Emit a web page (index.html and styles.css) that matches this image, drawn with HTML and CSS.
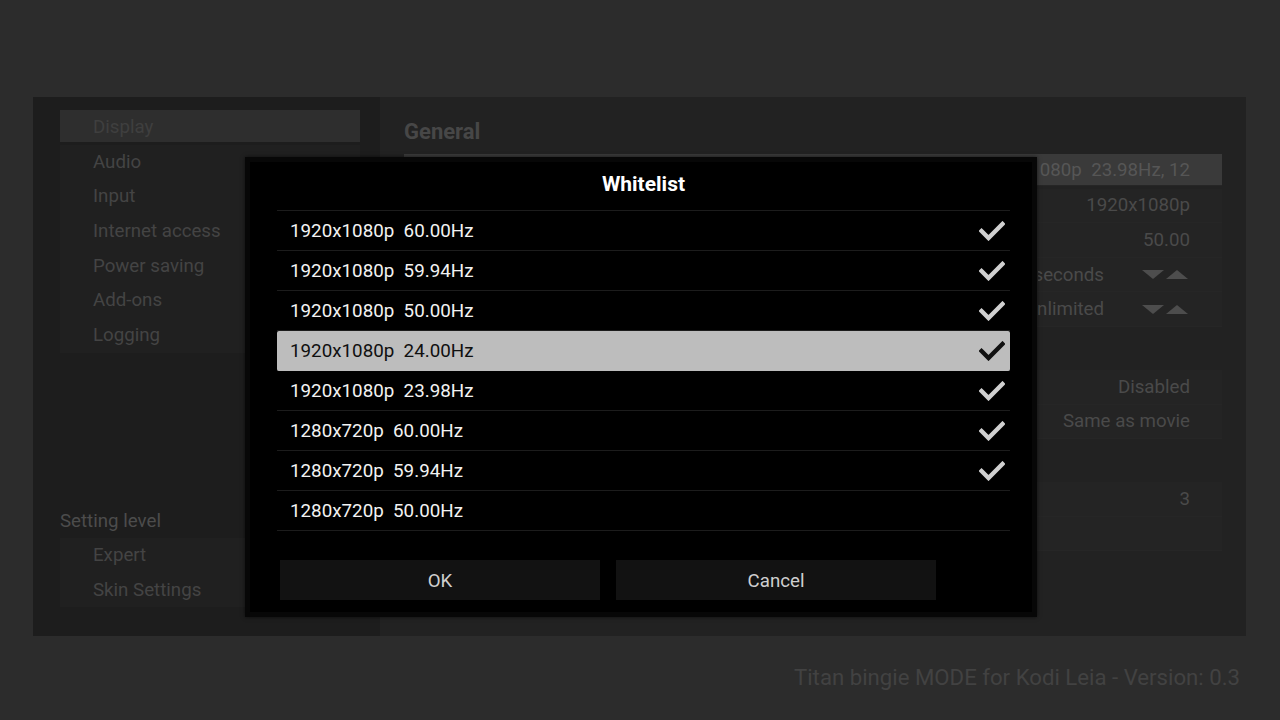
FILE: index.html
```html
<!DOCTYPE html>
<html lang="en">
<head>
<meta charset="utf-8">
<title>Settings - Whitelist</title>
<link rel="stylesheet" href="styles.css">
</head>
<body>
<div class="screen">
  <div class="panel">
    <aside class="sidebar">
      <ul class="menu">
        <li class="menu-item active">Display</li>
        <li class="menu-item">Audio</li>
        <li class="menu-item">Input</li>
        <li class="menu-item">Internet access</li>
        <li class="menu-item">Power saving</li>
        <li class="menu-item">Add-ons</li>
        <li class="menu-item">Logging</li>
      </ul>
      <div class="level">
        <div class="level-title">Setting level</div>
        <ul class="menu">
          <li class="menu-item">Expert</li>
          <li class="menu-item">Skin Settings</li>
        </ul>
      </div>
    </aside>
    <main class="content">
      <h2 class="group-title">General</h2>
      <div class="row focused"><span class="label"></span><span class="value"><span>1920x1080p  60.00Hz, 1920x1080p  23.98Hz, 12</span></span></div>
      <div class="row"><span class="label"></span><span class="value"><span>1920x1080p</span></span></div>
      <div class="row"><span class="label"></span><span class="value"><span>50.00</span></span></div>
      <div class="row"><span class="label"></span><span class="value"><span>0.0 seconds</span></span><span class="spin"><i class="down"></i><i class="up"></i></span></div>
      <div class="row"><span class="label"></span><span class="value"><span>Unlimited</span></span><span class="spin"><i class="down"></i><i class="up"></i></span></div>
      <div class="group-gap"></div>
      <div class="row"><span class="label"></span><span class="value"><span>Disabled</span></span></div>
      <div class="row"><span class="label"></span><span class="value"><span>Same as movie</span></span></div>
      <div class="group-gap"></div>
      <div class="row"><span class="label"></span><span class="value"><span>3</span></span></div>
      <div class="row"><span class="label"></span><span class="value"></span></div>
    </main>
  </div>
  <div class="footer">Titan bingie MODE for Kodi Leia - Version: 0.3</div>

  <div class="dialog">
    <div class="dialog-title">Whitelist</div>
    <ul class="list">
      <li class="list-item"><span class="res">1920x1080p  60.00Hz</span><svg class="check" viewBox="0 0 26 20"><polyline points="2.5,10 9.5,17 23.5,3"/></svg></li>
      <li class="list-item"><span class="res">1920x1080p  59.94Hz</span><svg class="check" viewBox="0 0 26 20"><polyline points="2.5,10 9.5,17 23.5,3"/></svg></li>
      <li class="list-item"><span class="res">1920x1080p  50.00Hz</span><svg class="check" viewBox="0 0 26 20"><polyline points="2.5,10 9.5,17 23.5,3"/></svg></li>
      <li class="list-item selected"><span class="res">1920x1080p  24.00Hz</span><svg class="check" viewBox="0 0 26 20"><polyline points="2.5,10 9.5,17 23.5,3"/></svg></li>
      <li class="list-item"><span class="res">1920x1080p  23.98Hz</span><svg class="check" viewBox="0 0 26 20"><polyline points="2.5,10 9.5,17 23.5,3"/></svg></li>
      <li class="list-item"><span class="res">1280x720p  60.00Hz</span><svg class="check" viewBox="0 0 26 20"><polyline points="2.5,10 9.5,17 23.5,3"/></svg></li>
      <li class="list-item"><span class="res">1280x720p  59.94Hz</span><svg class="check" viewBox="0 0 26 20"><polyline points="2.5,10 9.5,17 23.5,3"/></svg></li>
      <li class="list-item"><span class="res">1280x720p  50.00Hz</span></li>
    </ul>
    <div class="buttons">
      <button class="btn">OK</button>
      <button class="btn">Cancel</button>
    </div>
  </div>
</div>
</body>
</html>
```

FILE: styles.css
```css
* { box-sizing: border-box; }
html, body { margin: 0; padding: 0; }
body {
  width: 1280px;
  height: 720px;
  overflow: hidden;
  background: #2c2c2c;
  font-family: Roboto, "Noto Sans", "Liberation Sans", sans-serif;
}
.screen {
  position: relative;
  width: 1280px;
  height: 720px;
  padding: 97px 34px 0 33px;
}
.panel {
  display: flex;
  height: 539px;
  background: #222222;
}
.sidebar {
  width: 347px;
  flex: none;
  background: #1d1d1d;
  padding: 13px 20px 0 27px;
  display: flex;
  flex-direction: column;
}
.menu { list-style: none; margin: 0; padding: 0; }
.menu-item {
  height: 34.7px;
  line-height: 35px;
  padding-left: 33px;
  font-size: 18.7px;
  color: #444444;
  background: #202020;
}
.menu-item.active { background: #2e2e2e; height: 32px; margin-bottom: 2.7px; line-height: 35px; color: #3f3f3f; }
.level { margin-top: 151px; }
.level-title {
  font-size: 18.7px;
  color: #4c4c4c;
  height: 34px;
  line-height: 34px;
}
.content {
  flex: 1;
  min-width: 0;
  padding: 0 24px;
}
.group-title {
  margin: 0;
  font-size: 22px;
  font-weight: 700;
  color: #474747;
  height: 57px;
  line-height: 70px;
}
.group-gap { height: 43px; }
.row {
  display: flex;
  align-items: center;
  height: 34.6px;
  padding: 0 32px 0 40px;
  font-size: 18.7px;
  color: #4a4a4a;
  background: #242424;
  border-bottom: 1px solid #262626;
}
.row.focused { background: #3a3a3a; height: 32px; margin-bottom: 2.6px; color: #565656; }
.row .label { flex: 0 0 594px; }
.row .value {
  flex: 1;
  min-width: 0;
  display: flex;
  justify-content: flex-end;
  overflow: hidden;
}
.row .value span { white-space: pre; flex: none; }
.spin { display: flex; gap: 2px; margin-left: 38px; margin-right: 2px; }
.spin i { display: block; width: 0; height: 0; border-left: 11px solid transparent; border-right: 11px solid transparent; }
.spin .down { border-top: 9px solid #4d4d4d; }
.spin .up { border-bottom: 9px solid #4d4d4d; }
.footer {
  position: absolute;
  right: 40px;
  top: 664px;
  font-size: 22.2px;
  color: #424242;
}
.dialog {
  position: absolute;
  left: 245px;
  top: 157px;
  width: 792px;
  height: 460px;
  background: #000;
  border: 5px solid #070707;
  padding: 0 22px 0 27px;
  box-shadow: 0 0 4px rgba(0,0,0,0.6);
}
.dialog-title {
  height: 48px;
  line-height: 45px;
  text-align: center;
  color: #fff;
  font-weight: 700;
  font-size: 21px;
}
.list {
  list-style: none;
  margin: 0;
  padding: 0;
  border-top: 1px solid #1c1c1c;
}
.list-item {
  display: flex;
  align-items: center;
  justify-content: space-between;
  height: 40px;
  padding: 0 5px 0 13px;
  border-bottom: 1px solid #1c1c1c;
  color: #f2f2f2;
  font-size: 18.8px;
}
.list-item .res { white-space: pre; }
.list-item.selected { background: #bdbdbd; color: #101010; border-radius: 2px; border-bottom-color: #bdbdbd; }
.check { width: 26px; height: 20px; display: block; }
.check polyline { fill: none; stroke: #d0d0d0; stroke-width: 4.4; stroke-linecap: square; stroke-linejoin: miter; }
.selected .check polyline { stroke: #111; }
.buttons {
  display: flex;
  gap: 16px;
  margin-top: 29px;
  padding-left: 3px;
}
.btn {
  width: 320px;
  height: 40px;
  border: none;
  background: #121212;
  color: #cfcfcf;
  font-family: inherit;
  font-size: 18.7px;
  line-height: 42px;
  padding: 0;
}
```
